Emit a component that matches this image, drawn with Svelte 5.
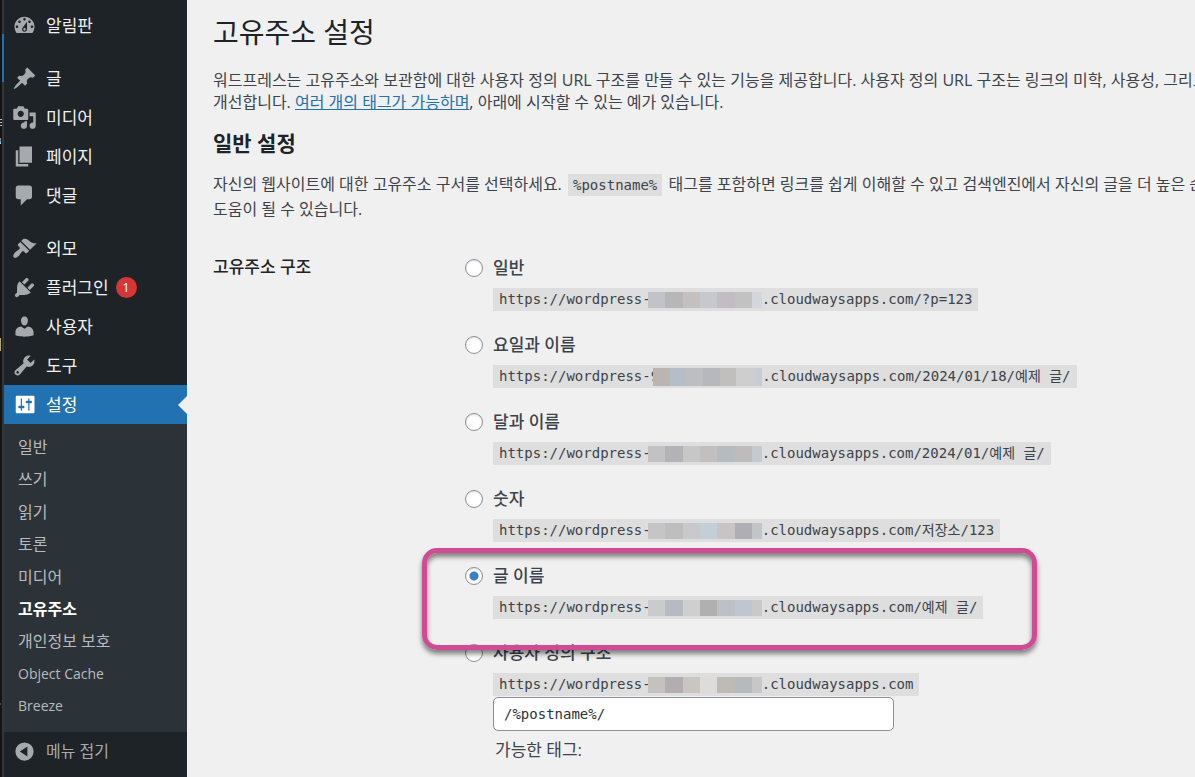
<script>
  const icons = {
    dashboard: 'M3.76 16h12.48c1.1-1.37 1.76-3.11 1.76-5 0-4.42-3.58-8-8-8s-8 3.58-8 8c0 1.89.66 3.63 1.76 5zM10 4c.55 0 1 .45 1 1s-.45 1-1 1-1-.45-1-1 .45-1 1-1zM6 6c.55 0 1 .45 1 1s-.45 1-1 1-1-.45-1-1 .45-1 1-1zm8 0c.55 0 1 .45 1 1s-.45 1-1 1-1-.45-1-1 .45-1 1-1zm-5.37 5.55L12 7v6c0 1.1-.9 2-2 2s-2-.9-2-2c0-.57.24-1.08.63-1.45zM4 10c.55 0 1 .45 1 1s-.45 1-1 1-1-.45-1-1 .45-1 1-1zm12 0c.55 0 1 .45 1 1s-.45 1-1 1-1-.45-1-1 .45-1 1-1zm-5 3c0-.55-.45-1-1-1s-1 .45-1 1 .45 1 1 1 1-.45 1-1z',
    post: 'M10.44 3.02l1.82-1.82 6.36 6.35-1.83 1.82c-1.05-.68-2.48-.57-3.41.36l-.75.75c-.92.93-1.04 2.35-.35 3.41l-1.83 1.82-2.41-2.41-2.8 2.79c-.42.42-3.38 2.71-3.8 2.29s1.86-3.39 2.28-3.81l2.79-2.79L4.1 9.36l1.83-1.82c1.05.69 2.48.57 3.4-.36l.75-.75c.93-.92 1.05-2.35.36-3.41z',
    media: 'M13 11V4c0-.55-.45-1-1-1h-1.67L9 1H5L3.67 3H2c-.55 0-1 .45-1 1v7c0 .55.45 1 1 1h10c.55 0 1-.45 1-1zM7 4.5c1.38 0 2.5 1.12 2.5 2.5S8.38 9.5 7 9.5 4.5 8.38 4.5 7 5.62 4.5 7 4.5zM14 6h5v10.5c0 1.38-1.12 2.5-2.5 2.5S14 17.88 14 16.5s1.12-2.5 2.5-2.5c.17 0 .34.02.5.05V9h-3V6zm-4 8.05V13h2v3.5c0 1.38-1.12 2.5-2.5 2.5S7 17.88 7 16.5 8.12 14 9.5 14c.17 0 .34.02.5.05z',
    page: 'M6 15V2h10v13H6zm-1 1h8v2H3V5h2v11z',
    comments: 'M5 2h9c1.1 0 2 .9 2 2v7c0 1.1-.9 2-2 2h-2l-5 5v-5H5c-1.1 0-2-.9-2-2V4c0-1.1.9-2 2-2z',
    appearance: 'M14.48 11.06L7.41 3.99l1.5-1.5c.5-.56 2.3-.47 3.51.32 1.21.8 1.43 1.28 2.91 2.1 1.18.64 2.45 1.26 4.45.85zm-.71.71L6.7 4.7 4.93 6.47c-.39.39-.39 1.02 0 1.41l1.06 1.06c.39.39.39 1.03 0 1.42-.6.6-1.43 1.11-2.21 1.69-.35.26-.7.53-1.01.84C1.43 14.23.4 16.08 1.4 17.07c.99 1 2.84-.03 4.18-1.36.31-.31.58-.66.85-1.02.57-.78 1.08-1.61 1.69-2.21.39-.39 1.02-.39 1.41 0l1.06 1.06c.39.39 1.02.39 1.41 0z',
    plugins: 'M13.11 4.36L9.87 7.6 8 5.73l3.24-3.24c.35-.34 1.05-.2 1.56.32.52.51.66 1.21.31 1.55zm-8 1.77l.91-1.12 9.01 9.01-1.19.84c-.71.71-2.63 1.16-3.82 1.16H6.14L4.9 17.26c-.59.59-1.54.59-2.12 0-.59-.58-.59-1.53 0-2.12l1.24-1.24v-3.88c0-1.13.4-3.19 1.09-3.89zm7.26 3.97l3.24-3.24c.34-.35 1.04-.21 1.55.31.52.51.66 1.21.31 1.55l-3.24 3.25z',
    users: 'M10 9.25c-2.27 0-2.73-3.44-2.73-3.44C7 4.02 7.82 2 9.97 2c2.16 0 2.98 2.02 2.71 3.81 0 0-.41 3.44-2.68 3.44zm0 2.57L12.72 10c2.39 0 4.52 2.33 4.52 4.53v2.49s-3.65 1.13-7.24 1.13c-3.65 0-7.24-1.13-7.24-1.13v-2.49c0-2.25 1.94-4.48 4.47-4.48z',
    tools: 'M16.68 9.77c-1.34 1.34-3.3 1.67-4.95.99l-5.41 6.52c-.99.99-2.59.99-3.58 0s-.99-2.59 0-3.57l6.52-5.42c-.68-1.65-.35-3.61.99-4.95 1.28-1.28 3.12-1.62 4.72-1.06l-2.89 2.89 2.82 2.82 2.86-2.87c.53 1.58.18 3.39-1.08 4.65zM3.81 16.21c.4.39 1.04.39 1.43 0 .4-.4.4-1.04 0-1.43-.39-.4-1.03-.4-1.43 0-.39.39-.39 1.03 0 1.43z',
    settings: 'M18 16V4c0-.55-.45-1-1-1H4c-.55 0-1 .45-1 1v12c0 .55.45 1 1 1h13c.55 0 1-.45 1-1zM8 11h1c.55 0 1 .45 1 1s-.45 1-1 1H8v1.5c0 .28-.22.5-.5.5s-.5-.22-.5-.5V13H6c-.55 0-1-.45-1-1s.45-1 1-1h1V5.5c0-.28.22-.5.5-.5s.5.22.5.5V11zm5-2h-1c-.55 0-1-.45-1-1s.45-1 1-1h1V5.5c0-.28.22-.5.5-.5s.5.22.5.5V7h1c.55 0 1 .45 1 1s-.45 1-1 1h-1v5.5c0 .28-.22.5-.5.5s-.5-.22-.5-.5V9z',
    collapse: 'M10 2.7a7.3 7.3 0 1 0 0 14.6a7.3 7.3 0 0 0 0-14.6zM12.3 6v8L6.3 10z'
  };

  const groups = [
    [{ icon: 'dashboard', text: '알림판' }],
    [
      { icon: 'post', text: '글' },
      { icon: 'media', text: '미디어' },
      { icon: 'page', text: '페이지' },
      { icon: 'comments', text: '댓글' }
    ],
    [
      { icon: 'appearance', text: '외모' },
      { icon: 'plugins', text: '플러그인', count: 1 },
      { icon: 'users', text: '사용자' },
      { icon: 'tools', text: '도구' },
      { icon: 'settings', text: '설정', current: true }
    ]
  ];

  const submenu = [
    { text: '일반' },
    { text: '쓰기' },
    { text: '읽기' },
    { text: '토론' },
    { text: '미디어' },
    { text: '고유주소', active: true },
    { text: '개인정보 보호' },
    { text: 'Object Cache', latin: true },
    { text: 'Breeze', latin: true }
  ];

  const options = [
    { id: 'plain', label: '일반', tail: '/?p=123', tones: ['#c2c2c9', '#b6b7b6', '#c5bfbd', '#c5c9cd', '#c1bdc3', '#c1c2c1', '#d3d6dc'] },
    { id: 'day', label: '요일과 이름', lead: '9', tail: '/2024/01/18/예제 글/', tones: ['#bab4b2', '#b6bdc8', '#bcbec2', '#b7b8be', '#c1bfbd', '#cececf', '#c9ccd1'] },
    { id: 'month', label: '달과 이름', tail: '/2024/01/예제 글/', tones: ['#c2c2c4', '#b3b2b7', '#c7c7c8', '#c2bfc1', '#b5bbbe', '#bfbbbd', '#c5c9d2'] },
    { id: 'numeric', label: '숫자', tail: '/저장소/123', tones: ['#c5c5c7', '#bdbfbe', '#c9c8ca', '#c3ced7', '#c8c3c5', '#b0aeb5', '#c2c5c8'] },
    { id: 'name', label: '글 이름', tail: '/예제 글/', tones: ['#c9cbcf', '#b6bac3', '#cfcfcf', '#b1b0ae', '#bdc0c8', '#bfc6d0', '#c9c9ca'] },
    { id: 'custom', label: '사용자 정의 구조', tail: '', tones: ['#c3c2be', '#b3adb1', '#c9c5c0', '#dddcda', '#bebbb4', '#b6babc', '#c5c7c9'] }
  ];

  let selected = $state('name');
  let structure = $state('/%postname%/');
</script>

{#snippet glyph(name)}
  <svg class="icon" viewBox="0 0 20 20" aria-hidden="true"><path fill="currentColor" fill-rule="evenodd" d={icons[name]} /></svg>
{/snippet}

<div class="page">
  <div class="edge" aria-hidden="true"></div>
  <nav class="sidebar">
    {#each groups as group}
      <ul class="menu">
        {#each group as item}
          <li>
            <a href="#{item.icon}" class="item" class:current={item.current}>
              {@render glyph(item.icon)}
              <span>{item.text}</span>
              {#if item.count}<span class="count">{item.count}</span>{/if}
            </a>
          </li>
        {/each}
      </ul>
    {/each}
    <ul class="submenu">
      {#each submenu as { text, active, latin }}
        <li><a href="#{text}" class:active class:latin>{text}</a></li>
      {/each}
    </ul>
    <button type="button" class="item fold">{@render glyph('collapse')}<span>메뉴 접기</span></button>
  </nav>

  <main>
    <h1>고유주소 설정</h1>
    <p class="intro">
      워드프레스는 고유주소와 보관함에 대한 사용자 정의 URL 구조를 만들 수 있는 기능을 제공합니다. 사용자 정의 URL 구조는 링크의 미학, 사용성, 그리고<br />
      개선합니다. <a href="#tags">여러 개의 태그가 가능하며</a>, 아래에 시작할 수 있는 예가 있습니다.
    </p>
    <h2>일반 설정</h2>
    <p class="about">
      자신의 웹사이트에 대한 고유주소 구서를 선택하세요. <code>%postname%</code> 태그를 포함하면 링크를 쉽게 이해할 수 있고 검색엔진에서 자신의 글을 더 높은 순<br />
      도움이 될 수 있습니다.
    </p>

    <div class="form">
      <h3 id="structure-title">고유주소 구조</h3>
      <div class="options" role="radiogroup" aria-labelledby="structure-title">
        {#each options as o}
          <div class="option" class:marked={o.id === 'name'}>
            <input type="radio" name="structure" id={o.id} value={o.id} bind:group={selected} />
            <div class="detail">
              <label for={o.id}>{o.label}</label>
              <code class="url"><span>https://wordpress-{o.lead ?? ''}</span><span class="mosaic" class:short={o.lead}>{#each o.tones as tone}<i style:background={tone}></i>{/each}</span><span>.cloudwaysapps.com{o.tail}</span></code>
              {#if o.id === 'custom'}
                <input type="text" aria-label={o.label} bind:value={structure} />
                <p class="tags">가능한 태그:</p>
              {/if}
            </div>
          </div>
        {/each}
      </div>
    </div>
  </main>
</div>

<style>
  :global(body) {
    margin: 0;
    background: #f0f0f0;
  }
  .page {
    display: flex;
    height: 100vh;
    overflow: hidden;
    background: #f0f0f0;
    color: #3c434a;
    font: 16px/22px "Open Sans", "Noto Sans CJK KR", sans-serif;
  }
  .edge {
    flex: none;
    width: 4px;
    background:
      linear-gradient(#2271b1, #2271b1) 2px 34px / 2px 48px no-repeat,
      repeating-linear-gradient(#bbb 0 1px, #1a1a1a 1px 3px) 0 119px / 2px 7px no-repeat,
      linear-gradient(#c8763a, #3f8fd0 50%, #ddd) 0 138px / 1px 6px no-repeat,
      linear-gradient(#b5ab62, #b5ab62) 0 338px / 1px 13px no-repeat,
      linear-gradient(#8a3a22, #8a3a22) 0 703px / 1px 2px no-repeat,
      linear-gradient(90deg, #141414 2px, #32373c 2px);
  }
  .sidebar {
    flex: none;
    width: 183px;
    padding-top: 6px;
    background: #1d2327;
    box-sizing: border-box;
  }
  ul {
    margin: 0;
    padding: 0;
    list-style: none;
  }
  .menu + .menu {
    margin-top: 14px;
  }
  .item {
    position: relative;
    display: flex;
    align-items: center;
    width: 100%;
    height: 39px;
    padding: 0 0 0 8px;
    border: 0;
    box-sizing: border-box;
    background: none;
    color: #f0f0f1;
    font: 17px/22px "Open Sans", "Noto Sans CJK KR", sans-serif;
    text-decoration: none;
  }
  .icon {
    flex: none;
    width: 25px;
    height: 25px;
    margin-right: 9px;
    color: #a7aaad;
  }
  .current {
    background: #2271b1;
    color: #fff;
  }
  .current .icon {
    color: #fff;
  }
  .current::after {
    content: "";
    position: absolute;
    right: 0;
    top: 50%;
    margin-top: -9px;
    border: 9px solid transparent;
    border-left-width: 0;
    border-right-color: #f0f0f0;
  }
  .count {
    width: 21px;
    margin-left: 7px;
    border-radius: 11px;
    background: #d63638;
    color: #fff;
    font-size: 13px;
    line-height: 21px;
    text-align: center;
  }
  .submenu {
    padding: 7px 0 10px;
    background: #2c3338;
  }
  .submenu a {
    display: block;
    padding: 5px 14px;
    color: #b8bbbe;
    line-height: 1.4;
    text-decoration: none;
  }
  .submenu .active {
    color: #fff;
    font-weight: 700;
  }
  .submenu .latin {
    font-size: 14px;
    line-height: 22px;
  }
  .fold {
    color: #a7aaad;
    font-size: 16px;
  }
  main {
    flex: 1;
    min-width: 0;
    padding: 14px 0 0 26px;
    overflow: hidden;
  }
  h1, h2, h3, p {
    margin: 0;
  }
  h1 {
    color: #1d2327;
    font-size: 28px;
    font-weight: 400;
    line-height: 36px;
  }
  .intro {
    margin-top: 19px;
    white-space: nowrap;
  }
  .intro a {
    color: #2271b1;
  }
  h2 {
    margin-top: 18px;
    color: #1d2327;
    font-size: 21px;
    line-height: 24px;
  }
  .about {
    margin-top: 17px;
    line-height: 24px;
    white-space: nowrap;
  }
  code {
    font-family: "DejaVu Sans Mono", "Noto Sans CJK KR", monospace;
    font-size: 14px;
  }
  .about code {
    margin: 0 2px;
    padding: 3px 5px;
    background: #dedede;
  }
  .form {
    display: grid;
    grid-template-columns: 252px 1fr;
    margin-top: 35px;
  }
  h3 {
    font-size: 17px;
    font-weight: 500;
    line-height: 22px;
    color: #1d2327;
  }
  .options {
    display: grid;
    gap: 22px;
  }
  .option {
    position: relative;
    display: flex;
    gap: 10px;
  }
  .marked::before {
    content: "";
    position: absolute;
    z-index: 1;
    left: -43px;
    top: -16px;
    width: 605px;
    height: 92px;
    border: 5px solid #cf4b94;
    border-radius: 15px;
    box-shadow: 0 4px 5px #0007, inset 0 4px 5px #0007;
    pointer-events: none;
  }
  input[type="radio"] {
    appearance: none;
    flex: none;
    width: 18px;
    height: 18px;
    margin: 3px 0 0;
    border: 1px solid #8c8f94;
    border-radius: 50%;
    box-sizing: border-box;
    background: #fff;
    box-shadow: inset 0 1px 2px #0002;
  }
  input[type="radio"]:checked {
    background: radial-gradient(circle, #3582c4 4px, #fff 5px);
  }
  .detail {
    flex: 1;
    min-width: 0;
  }
  label {
    display: block;
    width: fit-content;
    font-size: 17px;
    font-weight: 500;
    line-height: 24px;
  }
  .url {
    display: flex;
    align-items: center;
    width: fit-content;
    height: 23px;
    margin-top: 8px;
    padding: 0 6px;
    background: #dedede;
    line-height: 23px;
    white-space: pre;
  }
  .mosaic {
    display: flex;
    width: 114px;
    height: 16px;
    margin-left: -3px;
  }
  .short {
    width: 109px;
    height: 18px;
    margin-left: -6px;
  }
  .mosaic i {
    flex: 18;
  }
  .mosaic i:last-child {
    flex: 10;
  }
  input[type="text"] {
    display: block;
    width: 401px;
    height: 34px;
    margin-top: 1px;
    padding: 0 10px;
    border: 1px solid #8c8f94;
    border-radius: 5px;
    box-sizing: border-box;
    background: #fff;
    color: #2c3338;
    font: 14px "DejaVu Sans Mono", monospace;
  }
  .tags {
    margin-top: 8px;
    padding-left: 2px;
    font-size: 17px;
  }
</style>
